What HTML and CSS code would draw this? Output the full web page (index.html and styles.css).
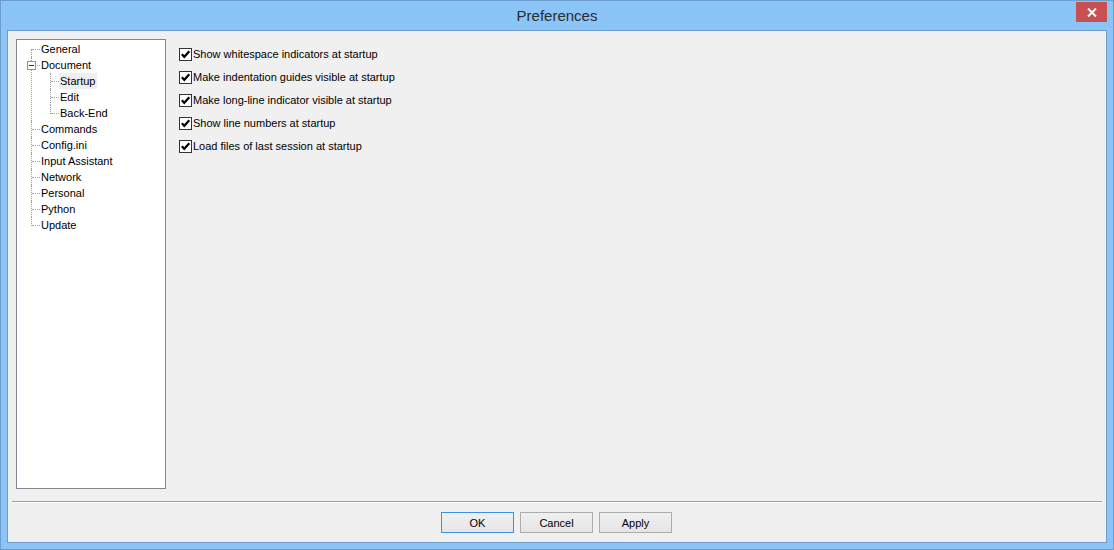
FILE: index.html
```html
<!DOCTYPE html>
<html>
<head>
<meta charset="utf-8">
<title>Preferences</title>
<link rel="stylesheet" href="styles.css">
</head>
<body>
<div class="window">
  <div class="titlebar">
    <div class="spacer"></div>
    <div class="title">Preferences</div>
    <div class="controls">
      <div class="close">
        <svg width="10" height="9" viewBox="0 0 10 9"><path d="M1 0.5 L9 8.5 M9 0.5 L1 8.5" stroke="#fff" stroke-width="2" fill="none"/></svg>
      </div>
    </div>
  </div>
  <div class="client">
    <div class="main">
      <div class="tree">
        <ul class="root">
          <li><span class="label">General</span></li>
          <li class="open"><span class="expander"><span class="minus"></span></span><span class="label">Document</span>
            <ul class="children">
              <li><span class="label sel">Startup</span></li>
              <li><span class="label">Edit</span></li>
              <li><span class="label">Back-End</span></li>
            </ul>
          </li>
          <li><span class="label">Commands</span></li>
          <li><span class="label">Config.ini</span></li>
          <li><span class="label">Input Assistant</span></li>
          <li><span class="label">Network</span></li>
          <li><span class="label">Personal</span></li>
          <li><span class="label">Python</span></li>
          <li><span class="label">Update</span></li>
        </ul>
      </div>
      <div class="options">
        <label class="opt"><span class="cb"><svg width="11" height="11" viewBox="0 0 11 11"><path d="M1.8 5.2 L4.3 7.8 L9.3 2.3" stroke="#000" stroke-width="2.2" fill="none"/></svg></span><span class="txt">Show whitespace indicators at startup</span></label>
        <label class="opt"><span class="cb"><svg width="11" height="11" viewBox="0 0 11 11"><path d="M1.8 5.2 L4.3 7.8 L9.3 2.3" stroke="#000" stroke-width="2.2" fill="none"/></svg></span><span class="txt">Make indentation guides visible at startup</span></label>
        <label class="opt"><span class="cb"><svg width="11" height="11" viewBox="0 0 11 11"><path d="M1.8 5.2 L4.3 7.8 L9.3 2.3" stroke="#000" stroke-width="2.2" fill="none"/></svg></span><span class="txt">Make long-line indicator visible at startup</span></label>
        <label class="opt"><span class="cb"><svg width="11" height="11" viewBox="0 0 11 11"><path d="M1.8 5.2 L4.3 7.8 L9.3 2.3" stroke="#000" stroke-width="2.2" fill="none"/></svg></span><span class="txt">Show line numbers at startup</span></label>
        <label class="opt"><span class="cb"><svg width="11" height="11" viewBox="0 0 11 11"><path d="M1.8 5.2 L4.3 7.8 L9.3 2.3" stroke="#000" stroke-width="2.2" fill="none"/></svg></span><span class="txt">Load files of last session at startup</span></label>
      </div>
    </div>
    <div class="separator"></div>
    <div class="buttons">
      <button class="btn default">OK</button>
      <button class="btn">Cancel</button>
      <button class="btn">Apply</button>
    </div>
  </div>
</div>
</body>
</html>
```
FILE: styles.css
```css
* { box-sizing: border-box; }
html, body { margin: 0; padding: 0; background: #ffffff; }
body { font-family: "Liberation Sans", Arial, sans-serif; font-size: 11px; color: #000; }

.window {
  width: 1114px;
  height: 550px;
  border: 1px solid #6d9dcc;
  background: #8bc4f7;
  padding: 0 6px 6px 6px;
  display: flex;
  flex-direction: column;
}

.titlebar {
  height: 29px;
  display: grid;
  grid-template-columns: 1fr auto 1fr;
  align-items: start;
}
.title {
  font-size: 15px;
  color: #2b2b2b;
  line-height: 29px;
}
.controls { justify-self: end; }
.close {
  width: 31px;
  height: 20px;
  margin-top: 1px;
  background: #c75050;
  display: flex;
  align-items: center;
  justify-content: center;
}
.close svg { display: block; }

.client {
  flex: 1;
  border: 1px solid #6f9ccb;
  background: #f0f0f0;
  display: flex;
  flex-direction: column;
}

.main {
  display: flex;
  padding: 8px 8px 0 8px;
}

.tree {
  width: 150px;
  height: 450px;
  border: 1px solid #828790;
  background: #fff;
  padding-top: 1px;
}
.tree ul { list-style: none; margin: 0; padding: 0; }
.tree li {
  position: relative;
  padding-left: 23px;
  line-height: 16px;
}
.tree li::before {
  content: "";
  position: absolute;
  left: 14px;
  top: 0;
  bottom: 0;
  border-left: 1px dotted #a0a0a0;
}
.tree li::after {
  content: "";
  position: absolute;
  left: 15px;
  top: 8px;
  width: 8px;
  border-top: 1px dotted #a0a0a0;
}
.tree ul.root > li:first-child::before { top: 8px; }
.tree li:last-child::before { bottom: auto; height: 9px; }
.tree ul.root > li.open::before { bottom: 0; height: auto; }

.tree ul.children { margin-left: -4px; }

.label {
  display: inline-block;
  height: 16px;
  padding: 0 2px 0 1px;
  white-space: nowrap;
}
.label.sel { background: #efefef; }

.expander {
  position: absolute;
  left: 10px;
  top: 4px;
  width: 9px;
  height: 9px;
  border: 1px solid #919191;
  background: #fff;
  z-index: 1;
  display: flex;
  align-items: center;
  justify-content: center;
}
.minus {
  width: 5px;
  height: 1px;
  background: #333;
}

.options {
  margin-left: 13px;
  padding-top: 9px;
  display: flex;
  flex-direction: column;
  gap: 10px;
}
.opt {
  display: flex;
  align-items: center;
  height: 13px;
}
.cb {
  width: 13px;
  height: 13px;
  border: 1px solid #333;
  background: #fff;
  display: flex;
  align-items: center;
  justify-content: center;
}
.cb svg { display: block; }
.txt { margin-left: 1px; line-height: 13px; white-space: nowrap; }

.separator {
  margin: 12px 4px 0 4px;
  height: 2px;
  border-top: 1px solid #a0a0a0;
  border-bottom: 1px solid #ffffff;
}

.buttons {
  margin-top: 9px;
  padding-right: 1px;
  display: flex;
  justify-content: center;
  gap: 6px;
}
.btn {
  width: 73px;
  height: 21px;
  border: 1px solid #acacac;
  background: linear-gradient(#f0f0f0, #e5e5e5);
  font-family: "Liberation Sans", Arial, sans-serif;
  font-size: 11px;
  color: #000;
  padding: 0;
  margin: 0;
}
.btn.default { border-color: #3c8fe8; }
```
